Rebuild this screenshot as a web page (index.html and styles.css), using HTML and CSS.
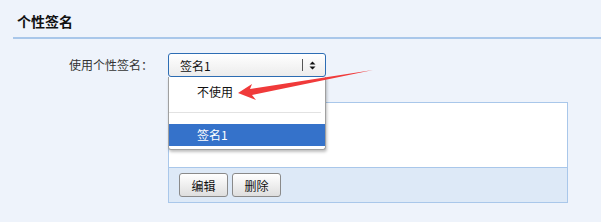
FILE: index.html
```html
<!DOCTYPE html>
<html lang="zh-CN">
<head>
  <meta charset="UTF-8" />
  <meta name="viewport" content="width=device-width, initial-scale=1.0" />
  <title>个性签名</title>
  <link rel="stylesheet" href="styles.css">
</head>
<body>
  <h2 class="section-title">个性签名</h2>

  <div class="form-row">
    <label class="form-label">使用个性签名：</label>
    <div class="select-wrap">
      <div class="select-box">
        <span class="select-value">签名1</span>
        <span class="select-sep"></span>
        <span class="select-arrows">
          <svg width="7" height="9" viewBox="0 0 7 9"><path d="M3.5 0.5 L6.5 3.5 H0.5 Z M3.5 8.5 L6.5 5.5 H0.5 Z" fill="#111"/></svg>
        </span>
      </div>
      <div class="select-menu">
        <div class="menu-item">不使用</div>
        <div class="menu-sep"></div>
        <div class="menu-item active">签名1</div>
      </div>
    </div>
  </div>

  <div class="sign-box">
    <div class="sign-text"></div>
    <div class="sign-tools">
      <button class="btn">编辑</button>
      <button class="btn">删除</button>
    </div>
  </div>

  <!-- annotation arrow -->
  <svg class="note-arrow" width="601" height="222" viewBox="0 0 601 222">
    <polygon points="238,93 252,84 250,89 373,70 252,95 256,100" fill="#f03a3a"/>
  </svg>
</body>
</html>
```

FILE: styles.css
```css
body {
  margin: 0;
  background: #eef3fb;
  font-family: "Noto Sans CJK SC", "Liberation Sans", sans-serif;
  font-size: 12px;
  color: #222;
  overflow: hidden;
}

.section-title {
  margin: 0 0 0 13px;
  padding: 11px 4px 6px;
  font-size: 14px;
  line-height: 20px;
  font-weight: bold;
  color: #111;
  border-bottom: 2px solid #a9c7ea;
}

.form-row {
  display: flex;
  align-items: center;
  margin-top: 14px;
  height: 24px;
}

.form-label {
  padding-left: 69px;
  margin-right: 15px;
  width: 84px;
  color: #333;
  line-height: 16px;
  white-space: nowrap;
}

.select-wrap {
  position: relative;
  width: 158px;
  height: 24px;
}

.select-box {
  display: flex;
  align-items: center;
  box-sizing: border-box;
  height: 24px;
  border: 1px solid #2d6db4;
  border-radius: 3px;
  background: linear-gradient(#ffffff, #ececec);
  padding-left: 11px;
}

.select-value {
  flex: 1;
  color: #111;
}

.select-sep {
  width: 1px;
  height: 12px;
  background: #555;
  margin-right: 6px;
}

.select-arrows {
  display: flex;
  width: 12px;
  margin-right: 4px;
}

.select-menu {
  position: absolute;
  top: 24px;
  left: 0;
  box-sizing: border-box;
  width: 158px;
  background: #fff;
  border: 1px solid #a0a0a0;
  border-top: none;
  border-radius: 0 0 3px 3px;
  box-shadow: 1px 2px 3px rgba(0,0,0,0.25);
  padding-bottom: 3px;
  z-index: 5;
}

.menu-item {
  height: 30px;
  line-height: 30px;
  padding-left: 28px;
  color: #111;
}

.menu-sep {
  height: 1px;
  background: #e2e2e2;
  margin: 5px 4px 11px 0;
}

.menu-item.active {
  height: 22px;
  line-height: 22px;
  background: #3572ca;
  color: #fff;
}

.sign-box {
  margin: 25px 0 0 168px;
  width: 400px;
  box-sizing: border-box;
  border: 1px solid #a9c7ea;
}

.sign-text {
  height: 64px;
  background: #fff;
  border-bottom: 1px solid #a9c7ea;
}

.sign-tools {
  display: flex;
  gap: 4px;
  padding: 5px 10px 0;
  height: 29px;
  background: #dde9f7;
}

.btn {
  width: 49px;
  height: 24px;
  padding: 0;
  border: 1px solid #8a8a8a;
  border-radius: 3px;
  background: linear-gradient(#ffffff, #dedede);
  font-family: "Noto Sans CJK SC", "Liberation Sans", sans-serif;
  font-size: 12px;
  color: #111;
}

.note-arrow {
  position: absolute;
  top: 0;
  left: 0;
  z-index: 10;
  pointer-events: none;
}
```
